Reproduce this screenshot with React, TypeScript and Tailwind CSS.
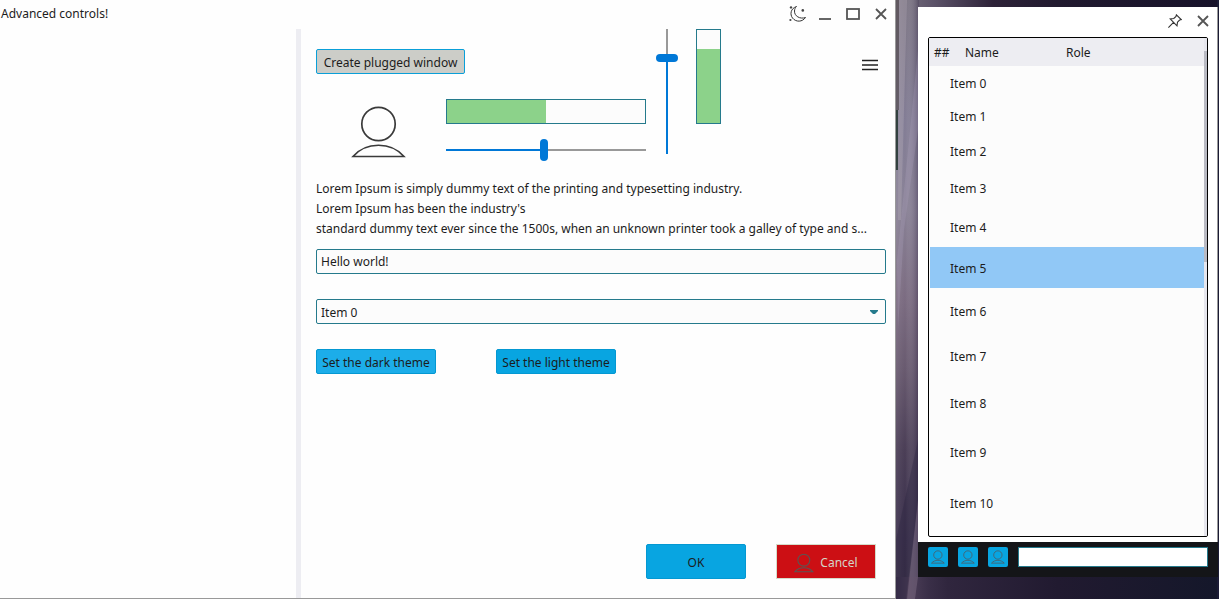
import React from "react";

const items = Array.from({ length: 11 }, (_, i) => ({ id: i, label: `Item ${i}`, height: 32 + i * 2 }));

function PersonIcon({ className, strokeWidth = 2 }: { className: string; strokeWidth?: number }) {
  return (
    <svg viewBox="0 0 56 52" className={className} fill="none" stroke="currentColor" strokeWidth={strokeWidth} aria-hidden="true">
      <circle cx="27.5" cy="18" r="16.7" />
      <path d="M2 50.5 C15 35.5 40 35.5 53 50.5 Z" />
    </svg>
  );
}

function CloseIcon() {
  return (
    <svg viewBox="0 0 12 12" className="h-3 w-3" fill="none" stroke="#555" strokeWidth="1.8" aria-hidden="true">
      <path d="M1 1 L11 11 M11 1 L1 11" />
    </svg>
  );
}

function MoonIcon() {
  return (
    <svg viewBox="0 0 18 18" className="h-[18px] w-[18px]" fill="none" stroke="#333" strokeWidth="1" aria-hidden="true">
      <path d="M8.5 1.5 C2.5 3.5 1.8 9.5 4.5 13 C8 17.5 14.5 17 17.5 12.5 C12 14.5 6.2 11 6.5 6 C6.6 4 7.2 2.6 8.5 1.5 Z" />
      <circle cx="14.8" cy="5.4" r="1.3" fill="#444" stroke="none" />
      <circle cx="3" cy="2.4" r="1.2" fill="#444" stroke="none" />
      <circle cx="2.4" cy="15" r="1.1" fill="#444" stroke="none" />
    </svg>
  );
}

function PinIcon() {
  return (
    <svg viewBox="0 0 14 14" className="h-3.5 w-3.5" fill="none" stroke="#333" strokeWidth="1.1" aria-hidden="true">
      <path d="M8.4 .8 L13.2 5.6 L11.6 6 L9.5 8.2 L9 11.8 L2.2 5 L5.8 4.5 L8 2.4 Z M5.5 8.4 L.4 13.6" />
    </svg>
  );
}

function Wallpaper() {
  return (
    <svg className="absolute inset-0 h-full w-full" viewBox="0 0 323 599" preserveAspectRatio="none" aria-hidden="true">
      <defs>
        <linearGradient id="top" x1="0" x2="1" y1="0" y2="0">
          <stop offset="0" stopColor="#77707f" />
          <stop offset=".12" stopColor="#5b5268" />
          <stop offset=".3" stopColor="#2d2238" />
          <stop offset=".5" stopColor="#211a2f" />
          <stop offset="1" stopColor="#17122a" />
        </linearGradient>
        <linearGradient id="side" x1="0" x2="0" y1="0" y2="1">
          <stop offset="0" stopColor="#77707f" />
          <stop offset=".2" stopColor="#7f7992" />
          <stop offset=".35" stopColor="#857d92" />
          <stop offset=".5" stopColor="#77677d" />
          <stop offset=".62" stopColor="#63546a" />
          <stop offset=".75" stopColor="#453851" />
          <stop offset=".9" stopColor="#352a47" />
          <stop offset="1" stopColor="#32283f" />
        </linearGradient>
        <linearGradient id="shade" x1="0" x2="1" y1="0" y2="0">
          <stop offset="0" stopColor="#fff" stopOpacity=".1" />
          <stop offset=".4" stopColor="#fff" stopOpacity=".03" />
          <stop offset="1" stopColor="#281c3c" stopOpacity=".4" />
        </linearGradient>
        <linearGradient id="foot" x1="0" x2="1" y1="0" y2="0">
          <stop offset="0" stopColor="#3a2f4a" />
          <stop offset=".04" stopColor="#4d3f58" />
          <stop offset=".1" stopColor="#3a2f48" />
          <stop offset=".16" stopColor="#30263e" />
          <stop offset=".5" stopColor="#211a30" />
          <stop offset="1" stopColor="#14172a" />
        </linearGradient>
      </defs>
      <rect width="323" height="599" fill="url(#top)" />
      <rect width="23" height="599" fill="url(#side)" />
      <rect width="23" height="599" fill="url(#shade)" />
      <rect y="577" width="323" height="22" fill="url(#foot)" />
      <path d="M3 0 H11 L5 220 H2 Z" fill="#b5abb6" opacity=".35" />
      <path d="M22 50 V130 L8 230 L2 330 L1 260 Z" fill="#b0a5c0" opacity=".25" />
      <path d="M22 440 V500 L10 599 H0 V540 Z" fill="#2e2540" opacity=".4" />
      <path d="M22 500 V577 L19 599 H11 Z" fill="#8c7b92" opacity=".4" />
      <rect width="3" height="110" fill="#4a4145" opacity=".6" />
      <rect y="110" width="2" height="60" fill="#1c3028" opacity=".8" />
      <rect x="321" width="2" height="599" fill="#1b1b35" />
    </svg>
  );
}

const titleButton = "flex h-7 w-7 items-center justify-center";
const field = "h-[25px] w-full rounded-xs border border-[#257a8c] bg-[#fcfcfc] px-1";
const themeButton = "h-[25px] w-[120px] rounded-xs border border-[#0498d2] pt-0.5 whitespace-nowrap";
const headCell = "border-b border-[#fcfcfc] pt-0.5 pl-[5px] font-normal";

export default function App() {
  return (
    <div className="flex h-screen min-h-[560px] overflow-hidden bg-[#31283f] font-['Noto_Sans','Open_Sans',sans-serif] text-[12px] leading-5 text-[#1c1c1c]">
      <main className="flex min-w-0 flex-1 flex-col border-r border-b border-[#999] bg-[#fefefe]">
        <header className="flex h-[29px] shrink-0 items-start justify-between pl-px">
          <h1 className="leading-7">Advanced controls!</h1>
          <div className="flex">
            <button aria-label="Toggle theme" className={titleButton}><MoonIcon /></button>
            <button aria-label="Minimize" className={titleButton}>
              <svg viewBox="0 0 12 12" className="h-3 w-3" aria-hidden="true"><rect x="0" y="10" width="12" height="2" fill="#666" /></svg>
            </button>
            <button aria-label="Maximize" className={titleButton}>
              <svg viewBox="0 0 14 12" className="h-3 w-3.5" fill="none" stroke="#555" strokeWidth="1.8" aria-hidden="true"><rect x="1" y="1" width="12" height="10" /></svg>
            </button>
            <button aria-label="Close" className={titleButton}><CloseIcon /></button>
          </div>
        </header>

        <div className="flex min-h-0 flex-1">
          <nav aria-label="Sidebar" className="w-[296px] shrink-0" />
          <div role="separator" className="w-[5px] shrink-0 bg-[#ededf2]" />

          <section className="flex min-w-0 flex-1 flex-col pr-[9px] pl-[15px]">
            <div className="flex h-[150px] shrink-0">
              <div className="w-[330px] pt-5">
                <button className="block h-[25px] w-[149px] rounded-xs border border-[#0a9fd8] bg-[#cccdc8] pt-0.5 whitespace-nowrap">Create plugged window</button>
                <div className="mt-[25px] flex justify-between">
                  <PersonIcon className="mt-[7px] ml-[35px] h-[52px] w-14 text-[#3a3a3a]" strokeWidth={1.7} />
                  <div className="w-[200px]">
                    <div role="progressbar" aria-label="Horizontal progress" aria-valuenow={50} className="h-[25px] border border-[#257a8c] bg-[#fcfcfc]">
                      <div className="h-full w-1/2 bg-[#8cd28a]" />
                    </div>
                    <input
                      type="range"
                      aria-label="Horizontal slider"
                      defaultValue={49}
                      className="mt-[15px] block h-[22px] w-full appearance-none bg-[linear-gradient(90deg,#0078d7_49%,#999_49%)] bg-size-[100%_2px] bg-center bg-no-repeat [&::-webkit-slider-thumb]:h-[22px] [&::-webkit-slider-thumb]:w-2 [&::-webkit-slider-thumb]:appearance-none [&::-webkit-slider-thumb]:rounded-sm [&::-webkit-slider-thumb]:bg-[#0078d7]"
                    />
                  </div>
                </div>
              </div>
              <input
                type="range"
                aria-label="Vertical slider"
                defaultValue={79}
                className="ml-2.5 h-[125px] w-[22px] appearance-none bg-[linear-gradient(180deg,#999_23%,#0078d7_23%)] bg-size-[2px_100%] bg-center bg-no-repeat [direction:rtl] [writing-mode:vertical-lr] [&::-webkit-slider-thumb]:h-2 [&::-webkit-slider-thumb]:w-[22px] [&::-webkit-slider-thumb]:appearance-none [&::-webkit-slider-thumb]:rounded-sm [&::-webkit-slider-thumb]:bg-[#0078d7]"
              />
              <div role="progressbar" aria-label="Vertical progress" aria-valuenow={80} className="ml-[18px] flex h-[95px] w-[25px] flex-col justify-end border border-[#257a8c] bg-[#fcfcfc]">
                <div className="h-4/5 bg-[#8cd28a]" />
              </div>
              <button aria-label="Menu" className="mt-6 mr-1 ml-auto flex h-6 w-6 items-center justify-center">
                <svg viewBox="0 0 16 12" className="h-3 w-4" fill="none" stroke="#222" strokeWidth="1.3" aria-hidden="true"><path d="M0 1.5 H16 M0 6 H16 M0 10.5 H16" /></svg>
              </button>
            </div>

            <div className="shrink-0">
              <p>Lorem Ipsum is simply dummy text of the printing and typesetting industry.</p>
              <p>Lorem Ipsum has been the industry's</p>
              <p className="whitespace-nowrap">standard dummy text ever since the 1500s, when an unknown printer took a galley of type and s...</p>
            </div>

            <input aria-label="Text" defaultValue="Hello world!" className={`${field} mt-2.5 shrink-0`} />
            <div className="relative mt-[25px] shrink-0">
              <select aria-label="Item" className={`${field} block appearance-none pt-0.5`}>
                {items.map((item) => <option key={item.id}>{item.label}</option>)}
              </select>
              <svg viewBox="0 0 8 4" className="pointer-events-none absolute top-[11px] right-2 h-1 w-2" aria-hidden="true"><path d="M0 0 H8 V1 L5 4 H3 L0 1 Z" fill="#257a8c" /></svg>
            </div>
            <div className="mt-[25px] flex shrink-0 gap-[60px]">
              <button className={`${themeButton} bg-[#1cade9]`}>Set the dark theme</button>
              <button className={`${themeButton} bg-[#08a5e1]`}>Set the light theme</button>
            </div>

            <footer className="mt-auto mr-2.5 mb-[19px] flex items-center justify-end gap-[30px]">
              <button className="h-[35px] w-[100px] rounded-xs border border-[#0498d2] bg-[#08a5e1] pt-0.5">OK</button>
              <button className="flex h-[35px] w-[100px] items-center justify-center gap-1.5 border border-[#d5dccb] bg-[#cc0f14] pt-0.5 text-[#d5d5c8]">
                <PersonIcon className="h-5 w-5 text-[#5c5552]" strokeWidth={3} />
                Cancel
              </button>
            </footer>
          </section>
        </div>
      </main>

      <aside className="relative flex w-[323px] shrink-0 pt-[7px] pr-px pb-[22px] pl-[22px]">
        <Wallpaper />
        <div className="relative flex min-w-0 flex-1 flex-col">
          <div className="flex min-h-0 flex-1 flex-col border-r border-[#999] bg-white">
            <div className="flex h-[30px] shrink-0 items-start justify-end">
              <button aria-label="Pin" className={titleButton}><PinIcon /></button>
              <button aria-label="Close panel" className={titleButton}><CloseIcon /></button>
            </div>
            <div className="mr-[9px] mb-[5px] ml-2.5 flex min-h-0 flex-1 overflow-hidden rounded-xs border border-black bg-[#fcfcfc]">
              <div className="min-w-0 flex-1 overflow-hidden">
                <table className="w-full table-fixed border-separate border-spacing-0 text-left">
                  <colgroup><col className="w-[31px]" /><col className="w-[101px]" /><col /></colgroup>
                  <thead>
                    <tr className="h-[29px] bg-[#ededf2]">
                      <th className={headCell}>##</th>
                      <th className={headCell}>Name</th>
                      <th className={headCell}>Role</th>
                    </tr>
                  </thead>
                  <tbody>
                    {items.map((item) => (
                      <tr key={item.id} style={{ height: item.height }}>
                        <td colSpan={3} className={`border-b border-l border-[#fcfcfc] pt-0.5 pl-5 ${item.id === 5 ? "bg-[#91c8f6]" : ""}`}>{item.label}</td>
                      </tr>
                    ))}
                  </tbody>
                </table>
              </div>
              <div className="w-[3px] shrink-0 bg-[#e6e6ed] pt-[13px]"><div className="h-[211px] bg-[#b9bac3]" /></div>
            </div>
          </div>
          <div className="flex h-[35px] shrink-0 gap-2.5 bg-[#141518] px-2.5 pt-[5px]">
            {["First user", "Second user", "Third user"].map((name) => (
              <button key={name} aria-label={name} className="flex h-5 w-5 shrink-0 items-center justify-center rounded-xs bg-[#08a5e1]">
                <PersonIcon className="h-3.5 w-3.5 text-[#53555c]" strokeWidth={3} />
              </button>
            ))}
            <input aria-label="Message" className="h-5 min-w-0 flex-1 border border-[#257a8c] bg-white px-1" />
          </div>
        </div>
      </aside>
    </div>
  );
}
